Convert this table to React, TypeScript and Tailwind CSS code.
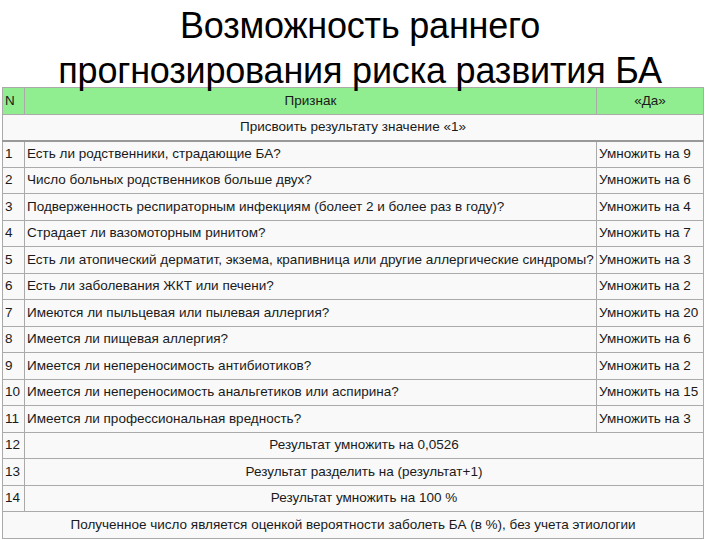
import React from 'react';

const rows: [string, string, string][] = [
  ['1', 'Есть ли родственники, страдающие БА?', 'Умножить на 9'],
  ['2', 'Число больных родственников больше двух?', 'Умножить на 6'],
  ['3', 'Подверженность респираторным инфекциям (болеет 2 и более раз в году)?', 'Умножить на 4'],
  ['4', 'Страдает ли вазомоторным ринитом?', 'Умножить на 7'],
  ['5', 'Есть ли атопический дерматит, экзема, крапивница или другие аллергические синдромы?', 'Умножить на 3'],
  ['6', 'Есть ли заболевания ЖКТ или печени?', 'Умножить на 2'],
  ['7', 'Имеются ли пыльцевая или пылевая аллергия?', 'Умножить на 20'],
  ['8', 'Имеется ли пищевая аллергия?', 'Умножить на 6'],
  ['9', 'Имеется ли непереносимость антибиотиков?', 'Умножить на 2'],
  ['10', 'Имеется ли непереносимость анальгетиков или аспирина?', 'Умножить на 15'],
  ['11', 'Имеется ли профессиональная вредность?', 'Умножить на 3'],
];

const steps: [string, string][] = [
  ['12', 'Результат умножить на 0,0526'],
  ['13', 'Результат разделить на (результат+1)'],
  ['14', 'Результат умножить на 100 %'],
];

const cell = 'border border-[#aaaaaa] px-[2px] h-[26.5px] whitespace-nowrap overflow-hidden';

export default function App() {
  return (
    <div className="w-[720px] h-[540px] bg-white overflow-hidden font-['Liberation_Sans',Arial,sans-serif] text-black">
      <h1 className="text-center text-[36px] leading-[45px] pt-[3px] h-[87px] tracking-[-0.2px]">
        Возможность раннего
        <br />
        прогнозирования риска развития БА
      </h1>
      <table className="ml-[2px] w-[702px] table-fixed border-collapse text-[13.5px] bg-[#f9f9f9] text-[#1a1a1a]">
        <colgroup>
          <col className="w-[22px]" />
          <col />
          <col className="w-[107px]" />
        </colgroup>
        <thead>
          <tr className="bg-[#90ee90]">
            <th className={`${cell} font-normal text-left`}>N</th>
            <th className={`${cell} font-normal text-center`}>Признак</th>
            <th className={`${cell} font-normal text-center`}>«Да»</th>
          </tr>
        </thead>
        <tbody>
          <tr>
            <td colSpan={3} className={`${cell} text-center border-b-2 border-b-[#999]`}>
              Присвоить результату значение «1»
            </td>
          </tr>
          {rows.map(([n, q, a]) => (
            <tr key={n}>
              <td className={cell}>{n}</td>
              <td className={cell}>{q}</td>
              <td className={cell}>{a}</td>
            </tr>
          ))}
          {steps.map(([n, t]) => (
            <tr key={n}>
              <td className={cell}>{n}</td>
              <td colSpan={2} className={`${cell} text-center`}>{t}</td>
            </tr>
          ))}
          <tr>
            <td colSpan={3} className={`${cell} text-center`}>
              Полученное число является оценкой вероятности заболеть БА (в %), без учета этиологии
            </td>
          </tr>
        </tbody>
      </table>
    </div>
  );
}
